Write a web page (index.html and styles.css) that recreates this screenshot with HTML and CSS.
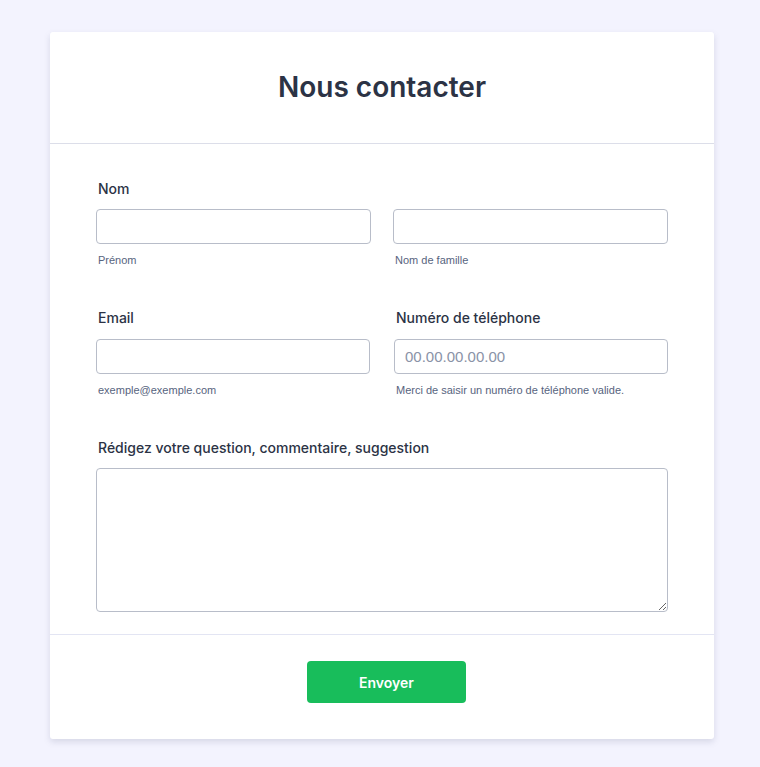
FILE: index.html
```html
<!DOCTYPE html>
<html lang="fr">
<head>
<meta charset="utf-8">
<title>Nous contacter</title>
<link rel="stylesheet" href="styles.css">
</head>
<body>
<form class="card">
  <div class="card-header">
    <h1 class="title">Nous contacter</h1>
  </div>
  <div class="card-body">
    <div class="field">
      <div class="label">Nom</div>
      <div class="pair">
        <div class="sub-field">
          <input class="input" type="text">
          <div class="sublabel">Prénom</div>
        </div>
        <div class="sub-field">
          <input class="input" type="text">
          <div class="sublabel">Nom de famille</div>
        </div>
      </div>
    </div>
    <div class="pair pair-wide">
      <div class="field">
        <div class="label">Email</div>
        <input class="input" type="email">
        <div class="sublabel">exemple@exemple.com</div>
      </div>
      <div class="field">
        <div class="label">Numéro de téléphone</div>
        <input class="input" type="tel" placeholder="00.00.00.00.00">
        <div class="sublabel">Merci de saisir un numéro de téléphone valide.</div>
      </div>
    </div>
    <div class="field">
      <div class="label">Rédigez votre question, commentaire, suggestion</div>
      <textarea class="textarea"></textarea>
    </div>
  </div>
  <div class="card-footer">
    <button class="submit" type="button">Envoyer</button>
  </div>
</form>
</body>
</html>
```
FILE: styles.css
```css
* { box-sizing: border-box; }
html, body { margin: 0; padding: 0; }
body {
  background: #f3f3fe;
  font-family: Inter, "Noto Sans", sans-serif;
  color: #2c3345;
  padding: 32px 0 28px 50px;
}
.card {
  width: 664px;
  background: #fff;
  border-radius: 3px;
  box-shadow: 0 3px 6px rgba(86, 96, 130, 0.18);
}
.card-header {
  height: 112px;
  display: flex;
  align-items: center;
  justify-content: center;
  border-bottom: 1px solid #dcdee9;
}
.title {
  margin: 0 0 2px;
  font-size: 28px;
  font-weight: 600;
  line-height: 34px;
  color: #2c3345;
}
.card-body {
  padding: 35px 46px 22px;
  display: flex;
  flex-direction: column;
  gap: 41px;
  border-bottom: 1px solid #e3e5f3;
}
.pair {
  display: grid;
  grid-template-columns: 1fr 1fr;
  column-gap: 22px;
}
.pair-wide { column-gap: 24px; }
.field, .sub-field {
  display: flex;
  flex-direction: column;
  min-width: 0;
}
.label {
  font-size: 14px;
  font-weight: 500;
  line-height: 20px;
  margin: 0 0 10px 2px;
  color: #2c3345;
}
.pair-wide .label { margin-bottom: 11px; }
.input {
  height: 35px;
  width: 100%;
  border: 1px solid #b8bdc9;
  border-radius: 4px;
  background: #fff;
  padding: 0 10px;
  font-family: "Liberation Sans", Arial, sans-serif;
  font-size: 15px;
  color: #2c3345;
  outline: none;
}
.input::placeholder { color: #8a93a7; }
.sublabel {
  margin: 9px 0 0 2px;
  font-family: "Liberation Sans", Arial, sans-serif;
  font-size: 11px;
  line-height: 14px;
  color: #57647e;
}
.textarea {
  width: 100%;
  height: 144px;
  border: 1px solid #b8bdc9;
  border-radius: 4px;
  background: #fff;
  resize: vertical;
  display: block;
  outline: none;
}
.card-footer {
  padding: 26px 0 36px 9px;
  display: flex;
  justify-content: center;
}
.submit {
  width: 159px;
  height: 42px;
  border: none;
  border-radius: 4px;
  background: #18bd5b;
  color: #fff;
  font-family: Inter, "Noto Sans", sans-serif;
  font-size: 14px;
  font-weight: 600;
  cursor: pointer;
}
```
